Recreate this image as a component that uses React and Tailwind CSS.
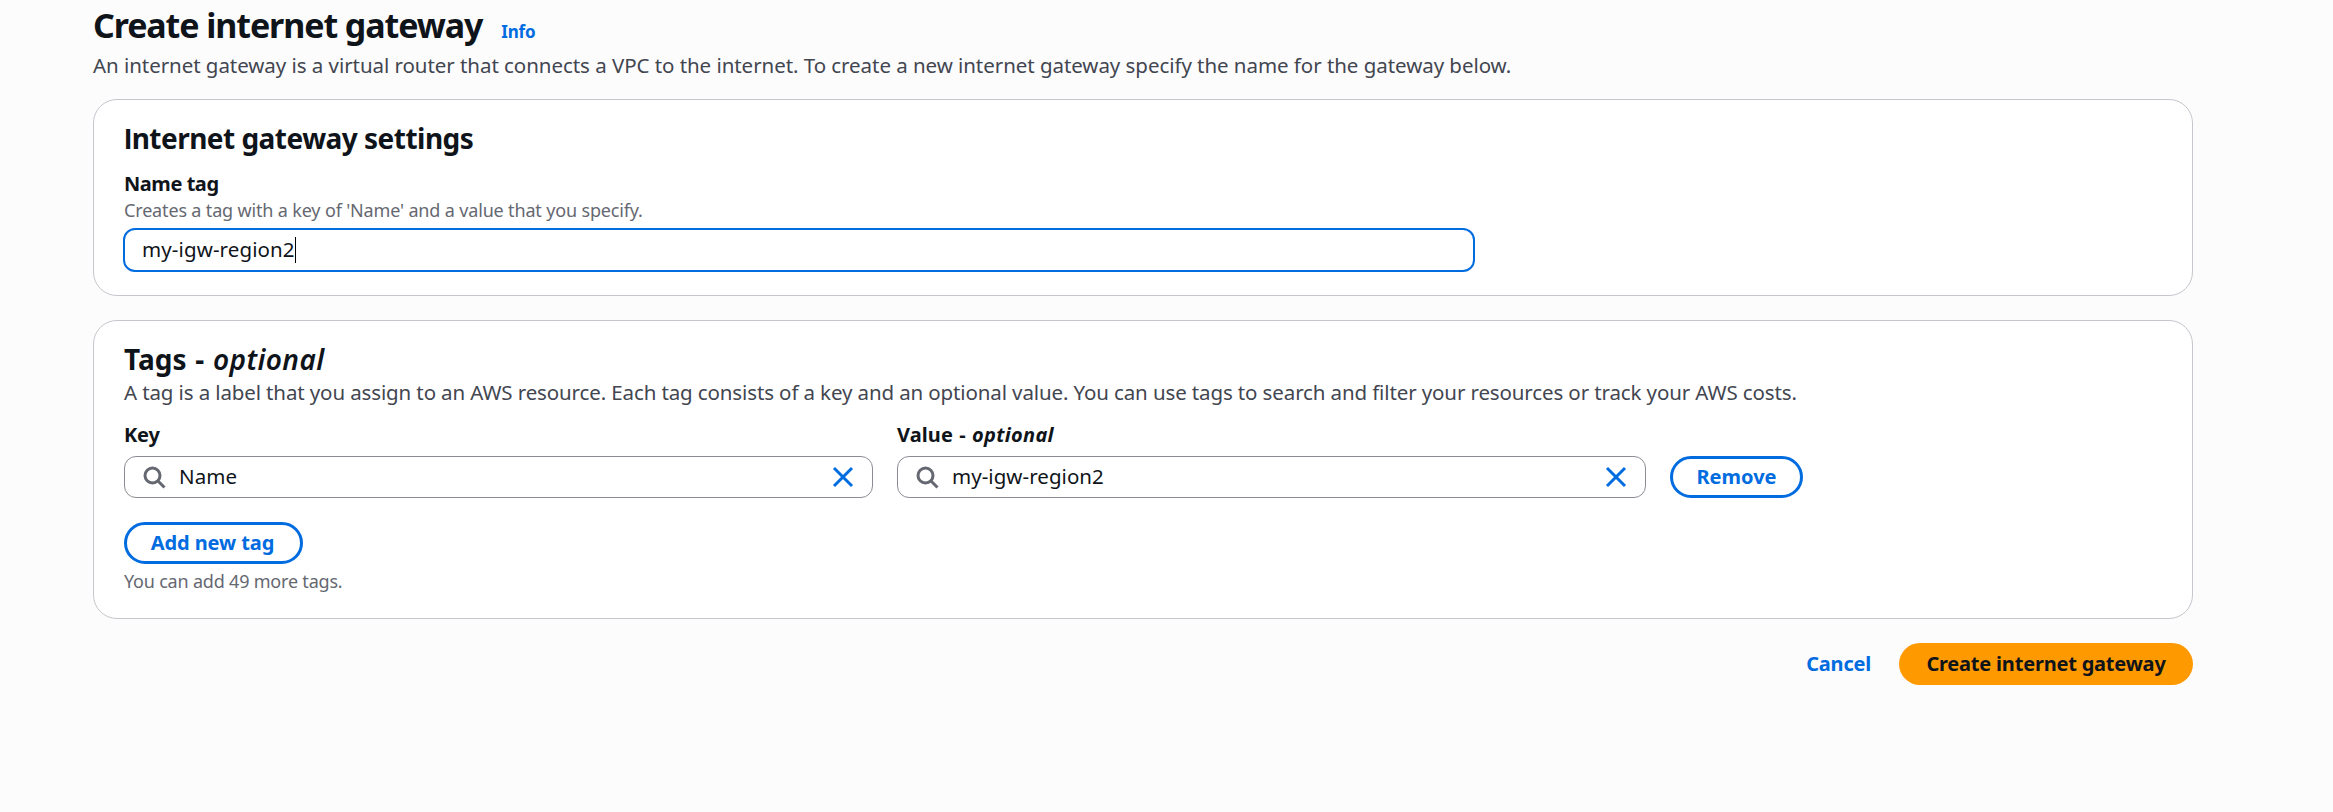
function SearchIcon() {
  return (
    <svg className="size-6 shrink-0" viewBox="0 0 16 16" fill="none" stroke="#656871" strokeWidth="2">
      <circle cx="7" cy="7" r="5" />
      <path d="m15 15-4.5-4.5" />
    </svg>
  );
}

function CloseIcon() {
  return (
    <svg className="size-6 shrink-0" viewBox="0 0 16 16" fill="none" stroke="#006ce0" strokeWidth="2">
      <path d="m2 2 12 12M14 2 2 14" />
    </svg>
  );
}

function TagInput({ value }) {
  return (
    <div className="flex h-[42px] items-center rounded-xl border border-[#8c8c94] bg-white px-[17px]">
      <SearchIcon />
      <span className="ml-[13px] pb-0.5 text-[20.5px] leading-[30px] tracking-[0.05px]">{value}</span>
      <button className="ml-auto flex" aria-label="Clear"><CloseIcon /></button>
    </div>
  );
}

const pill =
  "flex h-[42px] items-center justify-center rounded-full border-[3px] border-[#006ce0] bg-white text-[20px] font-bold text-[#006ce0]";

export default function App() {
  return (
    <main className="min-h-[812px] bg-[#fcfcfd] pr-[140px] pl-[93px] pt-[3px] font-['Noto_Sans','Open_Sans',sans-serif] text-[#0f141a]">
      <header>
        <div className="flex h-11 items-baseline">
          <h1 className="text-[34px] leading-[44px] font-bold tracking-[-1.1px]">Create internet gateway</h1>
          <a className="ml-[19px] text-[17px] leading-6 font-bold tracking-[-0.2px] text-[#006ce0]">Info</a>
        </div>
        <p className="mt-[3px] text-[20.5px] leading-[30px] tracking-[-0.05px] text-[#424650]">
          An internet gateway is a virtual router that connects a VPC to the internet. To create a new internet gateway specify the name for the gateway below.
        </p>
      </header>

      <section className="mt-[19px] h-[197px] rounded-3xl border border-[#c6c6cd] bg-white px-[30px] pt-5">
        <h2 className="h-9 text-[28px] leading-9 font-bold tracking-[-0.52px] first-letter:font-['Roboto'] first-letter:leading-none">Internet gateway settings</h2>
        <div className="mt-[13px]">
          <label className="block text-[20px] leading-[30px] font-bold tracking-[-0.45px]">Name tag</label>
          <p className="-mt-px text-[18px] leading-6 tracking-[-0.16px] text-[#656871]">Creates a tag with a key of 'Name' and a value that you specify.</p>
        </div>
        <div className="mt-1.5 -ml-px flex h-11 w-[1352px] items-center rounded-xl border-2 border-[#006ce0] bg-white pl-[17px]">
          <span className="pb-0.5 text-[20.5px] leading-[30px] tracking-[0.11px]">my-igw-region2</span>
          <span className="h-[26px] w-px bg-black" />
        </div>
      </section>

      <section className="mt-6 h-[299px] rounded-3xl border border-[#c6c6cd] bg-white px-[30px] pt-5">
        <h2 className="h-9 text-[28px] leading-9 font-bold [word-spacing:1.5px]">Tags - <em className="font-semibold tracking-[0.4px]">optional</em></h2>
        <p className="text-[20.5px] leading-[30px] tracking-[-0.12px] text-[#424650]">
          A tag is a label that you assign to an AWS resource. Each tag consists of a key and an optional value. You can use tags to search and filter your resources or track your AWS costs.
        </p>
        <div className="mt-[13px] grid grid-cols-[749px_749px_133px] items-end gap-x-6">
          <div>
            <label className="mb-1.5 block text-[20px] leading-[30px] font-bold tracking-[-0.2px]">Key</label>
            <TagInput value="Name" />
          </div>
          <div>
            <label className="mb-1.5 block text-[20px] leading-[30px] font-bold tracking-[0.1px] [word-spacing:1px]">Value - <em className="tracking-[0.3px]">optional</em></label>
            <TagInput value="my-igw-region2" />
          </div>
          <button className={pill}>Remove</button>
        </div>
        <button className={pill + " mt-6 w-[179px] pr-0.5 tracking-[-0.1px]"}>Add new tag</button>
        <p className="mt-[5px] text-[18px] leading-6 tracking-[-0.2px] text-[#656871]">You can add 49 more tags.</p>
      </section>

      <footer className="mt-6 flex h-[42px] items-center justify-end text-[20px] font-bold tracking-[-0.2px]">
        <button className="text-[#006ce0]">Cancel</button>
        <button className="ml-7 h-[42px] w-[294px] rounded-full bg-[#ff9900]">Create internet gateway</button>
      </footer>
    </main>
  );
}
